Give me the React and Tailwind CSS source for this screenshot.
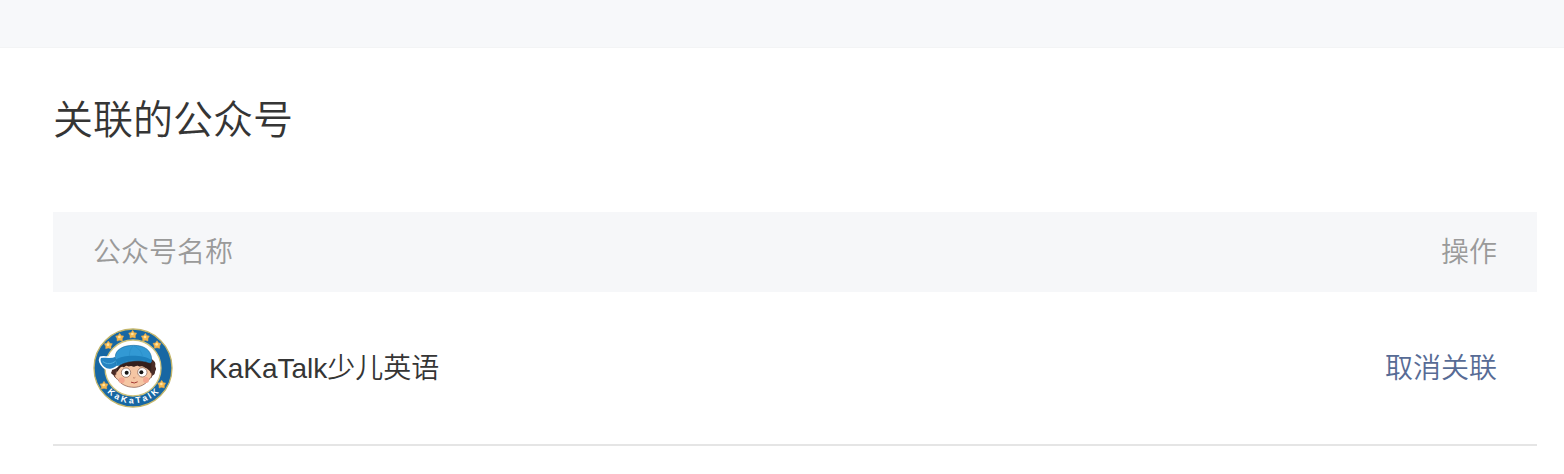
const STARS = [
  [61, 63],
  [95, 40],
  [134, 31],
  [172, 40],
  [207, 62],
  [48, 184],
  [221, 181],
];

function Logo() {
  return (
    <svg viewBox="15 12 240 240" className="size-20 shrink-0" role="img" aria-label="KaKaTalk">
      <defs>
        <path id="ring-text" d="M42 184 A107 107 0 0 0 228 184" />
      </defs>
      <circle cx="135" cy="132" r="117" fill="#1767a3" stroke="#c3b56a" strokeWidth="4" />
      <circle cx="135" cy="132" r="84" fill="#fff" stroke="#d2c47c" strokeWidth="4" />
      {STARS.map(([x, y]) => (
        <g key={x} transform={`translate(${x} ${y})`}>
          <path
            d="M0 -12 L5 -5 L12 -4 L8 4 L8 11 L0 9 L-8 11 L-8 4 L-12 -4 L-5 -5 Z"
            fill="#f5b84d"
            stroke="#e8a748"
            strokeWidth="1.5"
            strokeLinejoin="round"
          />
          <circle cx="-1" cy="-1" r="4" fill="#ffe3a0" />
        </g>
      ))}
      <text fontFamily="Liberation Sans, Arial, sans-serif" fontWeight="700" fontSize="26" fill="#fff">
        <textPath href="#ring-text" startOffset="50%" textAnchor="middle">
          K a K a T a l K
        </textPath>
      </text>
      {/* hair */}
      <path
        d="M82 108 C74 116 80 122 72 128 C66 134 76 137 70 144 C67 151 77 150 78 157 C83 165 90 163 96 169 L178 169 C182 162 191 164 193 155 C204 151 199 145 203 139 C207 132 200 130 202 123 C204 115 197 111 189 103 Z"
        fill="#4a2c26"
      />
      {/* face */}
      <path
        d="M84 146 C86 131 96 121 105 120 L170 120 C181 126 186 137 188 146 C194 150 191 161 184 165 C174 181 155 190 138 190 C116 190 97 180 89 166 C79 162 79 149 84 152 Z"
        fill="#f5c6a4"
        stroke="#7b4a3c"
        strokeWidth="2"
      />
      <path
        d="M85 146 C94 138 97 125 105 129 C110 132 112 123 118 126 C124 130 127 123 132 127 C139 132 144 122 151 126 C158 130 161 124 168 129 C174 133 180 134 189 145 L191 109 L86 110 Z"
        fill="#35201c"
      />
      <circle cx="101" cy="169" r="9" fill="#f2a58f" />
      <circle cx="174" cy="168" r="9" fill="#f2a58f" />
      <circle cx="114" cy="146" r="14" fill="#fff" stroke="#7c5446" strokeWidth="2" />
      <circle cx="163" cy="145" r="14" fill="#fff" stroke="#7c5446" strokeWidth="2" />
      <circle cx="116" cy="146" r="6" fill="#151515" />
      <circle cx="160" cy="145" r="6" fill="#151515" />
      <path d="M135 161 Q139 164 142 160" fill="none" stroke="#bd7963" strokeWidth="2.5" />
      <path d="M130 175 Q139 180 148 174" fill="none" stroke="#a43a35" strokeWidth="3" strokeLinecap="round" />
      {/* cap */}
      <path
        d="M37 100 C47 95 64 104 82 96 L94 120 C82 137 60 142 47 130 C37 122 32 108 37 100 Z"
        fill="#2583c2"
        stroke="#fff"
        strokeWidth="5"
        strokeLinejoin="round"
      />
      <path
        d="M82 98 C82 78 104 64 137 64 C171 64 190 80 191 106 C192 114 189 118 183 116 C160 107 121 108 95 123 C87 127 81 123 82 114 Z"
        fill="#3299d4"
        stroke="#1f70a2"
        strokeWidth="2"
      />
      <path d="M83 107 C105 92 165 91 190 108 L189 116 C163 103 119 105 88 124 Z" fill="#1d80bd" />
      <path d="M135 66 C127 75 124 85 124 96 M138 66 C153 73 161 84 163 96" fill="none" stroke="#288cc6" strokeWidth="2" />
      <path d="M44 112 C56 122 71 121 83 111" fill="none" stroke="#51afdf" strokeWidth="3" />
    </svg>
  );
}

export default function App() {
  return (
    <div className="bg-white font-['Liberation_Sans','Noto_Sans_CJK_SC',sans-serif] font-[350] text-[#353535]">
      <div className="h-12 border-b border-[#f3f4f5] bg-[#f7f8fa]" />
      <main className="pt-[42px] pr-[27px] pl-[53px]">
        <h1 className="text-[40px] leading-[60px]">关联的公众号</h1>
        <table className="mt-[62px] w-full text-[28px] leading-10">
          <thead className="bg-[#f6f7f9] text-[#9a9a9a]">
            <tr>
              <th scope="col" className="px-10 pt-[21px] pb-[19px] text-left font-[350]">
                公众号名称
              </th>
              <th scope="col" className="px-10 pt-[21px] pb-[19px] text-right font-[350]">
                操作
              </th>
            </tr>
          </thead>
          <tbody>
            <tr className="border-b-2 border-[#e5e5e5]">
              <td className="px-10 py-9">
                <div className="flex items-center gap-9">
                  <Logo />
                  <span className="pt-0.5">KaKaTalk少儿英语</span>
                </div>
              </td>
              <td className="px-10 py-9 text-right">
                <a href="#unlink" className="inline-block pt-0.5 text-[#576b95]">
                  取消关联
                </a>
              </td>
            </tr>
          </tbody>
        </table>
      </main>
    </div>
  );
}
